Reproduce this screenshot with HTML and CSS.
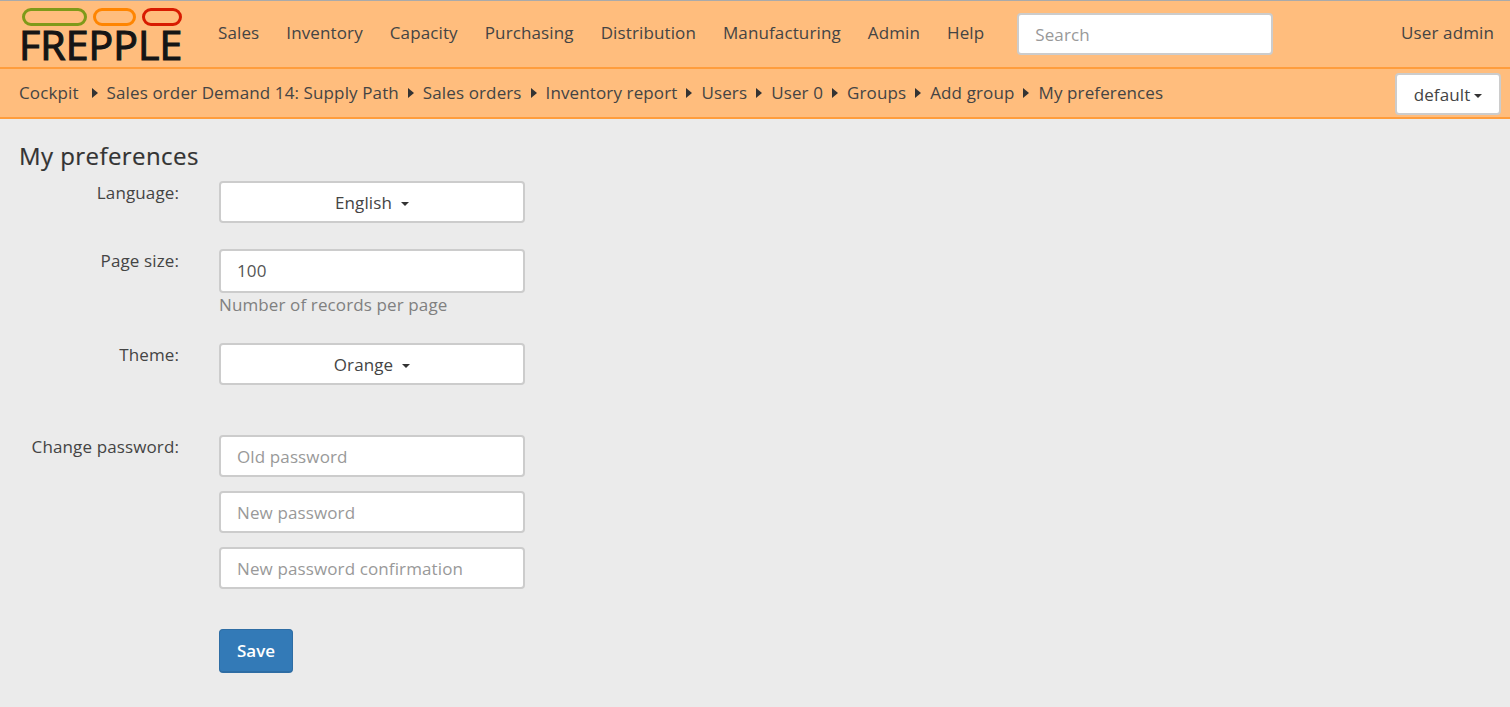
FILE: index.html
```html
<!DOCTYPE html>
<html lang="en">
<head>
<meta charset="utf-8">
<title>My preferences</title>
<link rel="stylesheet" href="styles.css">
</head>
<body>
<header class="topbar">
  <a class="logo" href="#">
    <span class="pills"><i class="pill green"></i><i class="pill orange"></i><i class="pill red"></i></span>
    <span class="logo-text">FREPPLE</span>
  </a>
  <nav class="menu">
    <a href="#">Sales</a><a href="#">Inventory</a><a href="#">Capacity</a><a href="#">Purchasing</a><a href="#">Distribution</a><a href="#">Manufacturing</a><a href="#">Admin</a><a href="#">Help</a>
  </nav>
  <input class="search" type="text" placeholder="Search">
  <a class="user" href="#">User admin</a>
</header>
<div class="crumbbar">
  <ol class="crumbs">
    <li>Cockpit</li><li>Sales order Demand 14: Supply Path</li><li>Sales orders</li><li>Inventory report</li><li>Users</li><li>User 0</li><li>Groups</li><li>Add group</li><li>My preferences</li>
  </ol>
  <button class="btn scenario" type="button">default<span class="caret small"></span></button>
</div>
<main class="content">
  <h1>My preferences</h1>
  <form class="form">
    <div class="row r-lang">
      <label>Language:</label>
      <div class="field"><button class="btn select" type="button">English<span class="caret"></span></button></div>
    </div>
    <div class="row r-size">
      <label>Page size:</label>
      <div class="field"><input class="input tall" type="text" value="100"><p class="help">Number of records per page</p></div>
    </div>
    <div class="row r-theme">
      <label>Theme:</label>
      <div class="field"><button class="btn select" type="button">Orange<span class="caret"></span></button></div>
    </div>
    <div class="row r-pass">
      <label>Change password:</label>
      <div class="field stack">
        <input class="input" type="password" placeholder="Old password">
        <input class="input" type="password" placeholder="New password">
        <input class="input" type="password" placeholder="New password confirmation">
      </div>
    </div>
    <div class="row r-save">
      <label></label>
      <div class="field"><button class="save" type="button">Save</button></div>
    </div>
  </form>
</main>
</body>
</html>
```
FILE: styles.css
```css
* { box-sizing: border-box; }
html, body { height: 100%; }
body {
  margin: 0;
  background: #ebebeb;
  color: #444;
  font-family: "Open Sans", sans-serif;
  font-size: 17px;
  line-height: 22px;
  letter-spacing: 0.12px;
  overflow: hidden;
}
a { color: #444; text-decoration: none; }
.topbar {
  height: 69px;
  display: flex;
  align-items: flex-start;
  background: #ffbd7d;
  border-top: 1px solid #aaa;
  border-bottom: 2px solid #ff9d3c;
  padding-left: 21px;
}
.logo { width: 161px; height: 60px; margin-top: 7px; display: block; flex: none; }
.pills { display: flex; height: 19px; padding-left: 1px; }
.pill { display: block; height: 18px; border: 3px solid; border-radius: 9px; margin-right: 6px; }
.pill.green { width: 65px; border-color: #7f9a19; }
.pill.orange { width: 43px; border-color: #ff8500; }
.pill.red { width: 40px; border-color: #d81b00; margin-right: 0; }
.logo-text {
  display: block;
  margin-left: -2px;
  font-family: "Open Sans", sans-serif;
  font-size: 41px;
  line-height: 34px;
  letter-spacing: 0.1px;
  color: #151515;
  -webkit-text-stroke: 1.2px #151515;
}
.menu { display: flex; margin-left: 36px; gap: 27px; padding-top: 21px; }
.search {
  width: 256px;
  height: 42px;
  margin: 12px 0 0 33px;
  padding: 0 16px;
  border: 2px solid #ccc;
  border-radius: 4px;
  background: #fff;
  font: 17px "Open Sans", sans-serif;
  letter-spacing: 0.12px;
  color: #444;
}
input::placeholder { color: #999; opacity: 1; }
.user { margin-left: auto; padding: 21px 16px 0 0; }
.crumbbar {
  height: 50px;
  display: flex;
  align-items: flex-start;
  justify-content: space-between;
  background: #ffbd7d;
  border-bottom: 2px solid #ff9d3c;
  padding: 0 9px 0 19px;
}
.crumbs { list-style: none; margin: 0; padding: 13px 0 0; display: flex; }
.crumbs li + li { position: relative; padding-left: 24px; }
.crumbs li:first-child { margin-right: 4px; }
.crumbs li + li::before {
  content: "";
  position: absolute;
  left: 9px;
  top: 6px;
  border-left: 6px solid #333;
  border-top: 5px solid transparent;
  border-bottom: 5px solid transparent;
}
.btn {
  display: block;
  background: #fff;
  border: 2px solid #ccc;
  border-radius: 4px;
  color: #444;
  font: 17px/22px "Open Sans", sans-serif;
  letter-spacing: 0.12px;
  text-align: center;
}
.scenario { width: 106px; height: 42px; margin-top: 4px; padding: 2px 0 0; }
.caret {
  display: inline-block;
  width: 0;
  height: 0;
  margin-left: 9px;
  vertical-align: middle;
  border-top: 4px solid #333;
  border-left: 4px solid transparent;
  border-right: 4px solid transparent;
}
.caret.small { margin-left: 4px; }
.content { padding: 0 19px; }
h1 {
  margin: 0;
  padding-top: 22px;
  font-size: 24px;
  line-height: 30px;
  font-weight: 400;
  letter-spacing: 0.43px;
  color: #333;
  -webkit-text-stroke: 0.2px #333;
}
.form { display: block; margin-top: 10px; }
.row { display: flex; }
.row label { width: 160px; text-align: right; padding-top: 1px; flex: none; line-height: 22px; }
.field { width: 306px; margin-left: 40px; flex: none; }
.select { width: 306px; height: 42px; padding: 2px 0 0; }
.input {
  display: block;
  width: 306px;
  height: 42px;
  padding: 0 16px;
  background: #fff;
  border: 2px solid #ccc;
  border-radius: 4px;
  font: 17px "Open Sans", sans-serif;
  letter-spacing: 0.12px;
  color: #555;
}
.input.tall { height: 44px; padding-bottom: 2px; }
.help { margin: 0; color: #808080; line-height: 24px; }
.r-lang { height: 68px; }
.r-size { height: 94px; }
.r-theme { height: 92px; }
.r-pass { height: 194px; }
.stack { display: flex; flex-direction: column; gap: 14px; }
.save {
  display: block;
  width: 74px;
  height: 44px;
  background: #337ab7;
  border: 1px solid #2e6da4;
  border-bottom-width: 2px;
  border-radius: 4px;
  color: #fff;
  font: 600 17px/22px "Open Sans", sans-serif;
  padding: 0;
}
```
